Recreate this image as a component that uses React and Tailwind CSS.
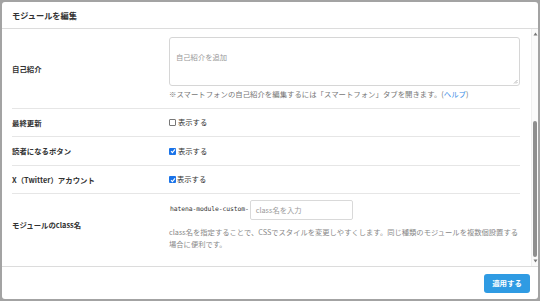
import React from "react";

const font = { fontFamily: '"Noto Sans CJK JP", "Noto Sans", sans-serif' };

function Check({ checked }) {
  if (!checked) {
    return <span className="inline-block w-[7px] h-[7px] border border-[#777] rounded-[1px] bg-white" />;
  }
  return (
    <span className="inline-flex items-center justify-center w-[7px] h-[7px] rounded-[1px] bg-[#1a73e8]">
      <svg width="6" height="6" viewBox="0 0 6 6">
        <path d="M1 3.2 L2.4 4.6 L5 1.4" stroke="white" strokeWidth="1.1" fill="none" />
      </svg>
    </span>
  );
}

function Row({ label, children, className = "" }) {
  return (
    <div className={`flex items-center border-b border-[#e6e6e6] ${className}`}>
      <div className="w-[157px] shrink-0 text-[7.4px] font-bold text-[#333]">{label}</div>
      <div className="flex-1 min-w-0">{children}</div>
    </div>
  );
}

export default function App() {
  return (
    <div className="w-[540px] h-[301px] bg-[#a3a3a3] p-[2px]" style={font}>
      <div className="w-full h-full bg-white rounded-[3px] flex flex-col overflow-hidden">
        <div className="h-[27px] shrink-0 flex items-center px-[10px] border-b border-[#dcdcdc]">
          <span className="text-[8.2px] font-bold text-[#333]">モジュールを編集</span>
        </div>
        <div className="flex-1 flex min-h-0">
          <div className="flex-1 min-w-0 pl-[10px] pr-[11px] overflow-hidden">
            <Row label="自己紹介" className="pt-[8px] pb-[8px]">
              <div className="w-[351px] h-[49px] border border-[#d6d6d6] rounded-[3px] px-[6px] pt-[3px] relative">
                <span className="text-[7.3px] text-[#999]">自己紹介を追加</span>
                <svg className="absolute right-[1px] bottom-[1px]" width="5" height="5" viewBox="0 0 5 5">
                  <path d="M1 4.5 L4.5 1 M3 4.5 L4.5 3" stroke="#999" strokeWidth="0.7" />
                </svg>
              </div>
              <div className="mt-[2px] text-[7.4px] leading-[12px] text-[#777] whitespace-nowrap">
                ※スマートフォンの自己紹介を編集するには「スマートフォン」タブを開きます。(<span className="text-[#3a8ee6]">ヘルプ</span>)
              </div>
            </Row>
            <Row label="最終更新" className="h-[28px]">
              <div className="flex items-center gap-[2px] text-[7.3px] text-[#333]">
                <Check checked={false} />
                <span>表示する</span>
              </div>
            </Row>
            <Row label="読者になるボタン" className="h-[29px]">
              <div className="flex items-center gap-[2px] text-[7.3px] text-[#333]">
                <Check checked />
                <span>表示する</span>
              </div>
            </Row>
            <Row label="X（Twitter）アカウント" className="h-[28px]">
              <div className="flex items-center gap-[1px] text-[7.3px] text-[#333]">
                <Check checked />
                <span>表示する</span>
              </div>
            </Row>
            <div className="flex items-center pt-[6px] pb-[5px]">
              <div className="w-[157px] shrink-0 text-[7.4px] font-bold text-[#333]">モジュールのclass名</div>
              <div className="flex-1 min-w-0">
                <div className="flex items-center">
                  <span className="text-[6.4px] text-[#333] ml-[1px]" style={{ fontFamily: '"DejaVu Sans Mono", monospace', letterSpacing: "-0.1px" }}>
                    hatena-module-custom-
                  </span>
                  <div className="ml-[1px] w-[103px] h-[20px] border border-[#d9d9d9] rounded-[2px] flex items-center px-[5px]">
                    <span className="text-[7.3px] text-[#999]">class名を入力</span>
                  </div>
                </div>
                <div className="mt-[6px] text-[7.3px] leading-[12px] text-[#888] pr-[2px]">
                  class名を指定することで、CSSでスタイルを変更しやすくします。同じ種類のモジュールを複数個設置する場合に便利です。
                </div>
              </div>
            </div>
          </div>
          <div className="w-[7px] shrink-0 flex flex-col items-center bg-[#fafafa] border-l border-[#efefef]">
            <svg className="mt-[3px]" width="5" height="4" viewBox="0 0 5 4"><path d="M2.5 0.5 L4.5 3.5 L0.5 3.5 Z" fill="#777" /></svg>
            <div className="mt-[85px] w-[4px] h-[136px] rounded-[2px] bg-[#8e8e8e]" />
            <div className="flex-1" />
            <svg className="mb-[3px]" width="5" height="4" viewBox="0 0 5 4"><path d="M0.5 0.5 L4.5 0.5 L2.5 3.5 Z" fill="#777" /></svg>
          </div>
        </div>
        <div className="h-[33px] shrink-0 border-t border-[#dcdcdc] flex items-center justify-end pr-[8px]">
          <button className="w-[46px] h-[19px] rounded-[3px] bg-[#2f9be3] text-white text-[7.4px] font-bold">
            適用する
          </button>
        </div>
      </div>
    </div>
  );
}
